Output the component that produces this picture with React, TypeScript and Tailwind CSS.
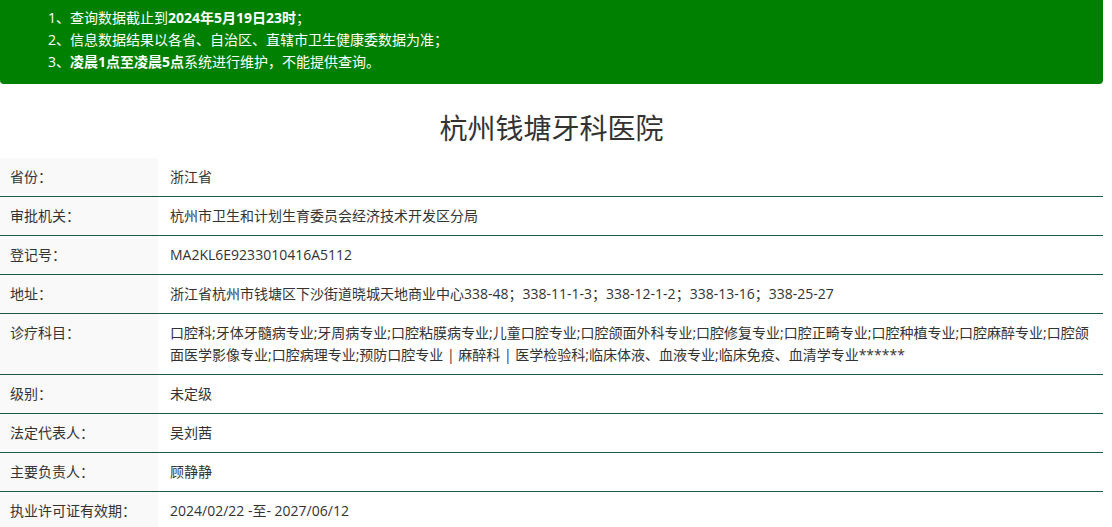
const font = {
  fontFamily: '"Open Sans", "Noto Sans CJK SC", sans-serif',
};

const rows: { label: string; value: string[] }[] = [
  { label: "省份：", value: ["浙江省"] },
  { label: "审批机关：", value: ["杭州市卫生和计划生育委员会经济技术开发区分局"] },
  { label: "登记号：", value: ["MA2KL6E9233010416A5112"] },
  {
    label: "地址：",
    value: ["浙江省杭州市钱塘区下沙街道晓城天地商业中心338-48；338-11-1-3；338-12-1-2；338-13-16；338-25-27"],
  },
  {
    label: "诊疗科目：",
    value: [
      "口腔科;牙体牙髓病专业;牙周病专业;口腔粘膜病专业;儿童口腔专业;口腔颌面外科专业;口腔修复专业;口腔正畸专业;口腔种植专业;口腔麻醉专业;口腔颌",
      "面医学影像专业;口腔病理专业;预防口腔专业 | 麻醉科 | 医学检验科;临床体液、血液专业;临床免疫、血清学专业******",
    ],
  },
  { label: "级别：", value: ["未定级"] },
  { label: "法定代表人：", value: ["吴刘茜"] },
  { label: "主要负责人：", value: ["顾静静"] },
  { label: "执业许可证有效期：", value: ["2024/02/22 -至- 2027/06/12"] },
];

export default function App() {
  return (
    <div className="w-[1112px] h-[527px] overflow-hidden bg-white text-[#333]" style={font}>
      <div className="w-[1103px]">
        <div className="bg-[#008000] text-white text-[14px] leading-[22px] pt-[7px] pb-[11px] pl-[48px] rounded-b-[4px]">
          <div>
            1、查询数据截止到<b>2024年5月19日23时</b>；
          </div>
          <div>2、信息数据结果以各省、自治区、直辖市卫生健康委数据为准；</div>
          <div>
            3、<b>凌晨1点至凌晨5点</b>系统进行维护，不能提供查询。
          </div>
        </div>

        <h1 className="text-center text-[28px] leading-[40px] pt-[24px] pb-[10px] text-[#333]">
          杭州钱塘牙科医院
        </h1>

        <div className="text-[14px] leading-[22px]">
          {rows.map((row, i) => (
            <div
              key={row.label}
              className={`flex ${i > 0 ? "border-t border-[#1b5a48]" : ""}`}
            >
              <div className="w-[158px] shrink-0 bg-[#f9f9f9] px-[10px] py-[8px]">
                {row.label}
              </div>
              <div className="flex-1 px-[12px] py-[8px]">
                {row.value.map((line) => (
                  <div key={line}>{line}</div>
                ))}
              </div>
            </div>
          ))}
        </div>
      </div>
    </div>
  );
}
